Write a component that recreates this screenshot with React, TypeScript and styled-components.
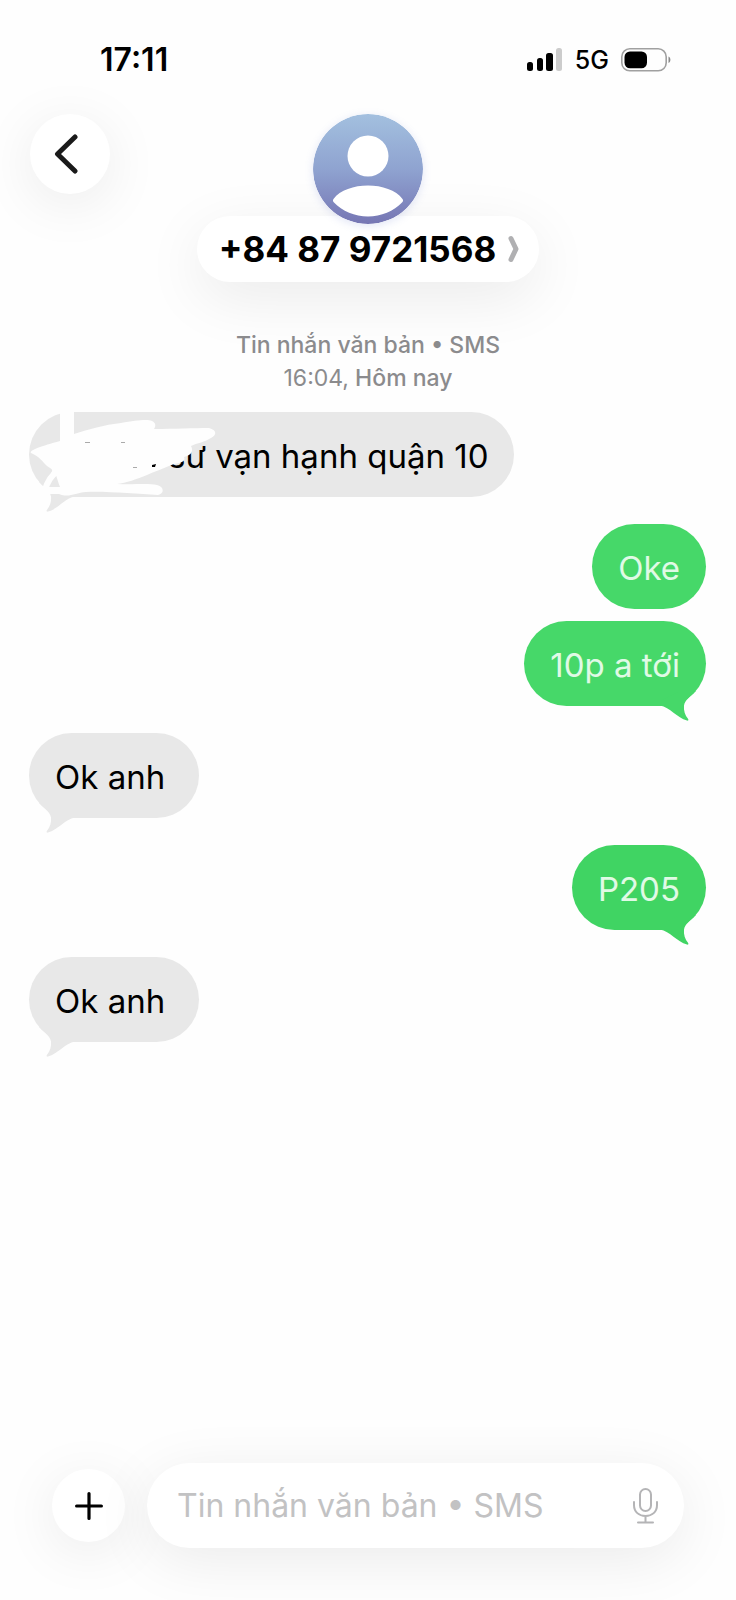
import React from "react";
import styled, { createGlobalStyle } from "styled-components";

const GlobalStyle = createGlobalStyle`
  * { box-sizing: border-box; }
  body {
    margin: 0;
    background: #fefefe;
    color: #000;
    font-family: Inter, "Liberation Sans", sans-serif;
  }
  button { border: 0; padding: 0; font: inherit; color: inherit; cursor: pointer; }
  svg { display: block; }
`;

const Screen = styled.div`
  display: flex;
  flex-direction: column;
  min-height: 100vh;
`;

const StatusBar = styled.header`
  display: flex;
  align-items: center;
  justify-content: space-between;
  padding: 40px 64px 34px 100px;
`;

const Clock = styled.time`
  font-size: 32px;
  font-weight: 600;
  line-height: 40px;
`;

const StatusIcons = styled.div`
  display: flex;
  align-items: center;
  gap: 12px;
`;

const Network = styled.span`
  font-size: 25px;
  font-weight: 500;
  line-height: 32px;
`;

const TopBar = styled.div`
  display: grid;
  grid-template-columns: 80px 1fr 80px;
  align-items: start;
  padding: 0 30px;
`;

const RoundButton = styled.button<{ $size: number }>`
  display: flex;
  align-items: center;
  justify-content: center;
  flex: none;
  width: ${(p) => p.$size}px;
  height: ${(p) => p.$size}px;
  border-radius: 50%;
  background: #fff;
  box-shadow: 0 10px 56px rgba(0, 0, 0, 0.08);
`;

const Contact = styled.div`
  display: flex;
  flex-direction: column;
  align-items: center;
`;

const Avatar = styled.svg`
  position: relative;
  z-index: 1;
  border-radius: 50%;
  box-shadow: 0 2px 8px rgba(110, 130, 210, 0.2);
`;

const ContactButton = styled.button`
  display: flex;
  align-items: center;
  gap: 12px;
  height: 66px;
  margin-top: -8px;
  padding: 0 19px 0 22px;
  border-radius: 33px;
  background: #fff;
  box-shadow: 0 16px 60px rgba(0, 0, 0, 0.08);
  font-size: 35px;
  font-weight: 700;
  line-height: 40px;
  white-space: nowrap;
`;

const Meta = styled.p`
  margin: 47px 0 17px;
  color: #8b8b8d;
  font-size: 23px;
  font-weight: 500;
  line-height: 33px;
  text-align: center;
`;

const MetaTime = styled.span`
  font-weight: 400;
`;

const Thread = styled.main`
  display: flex;
  flex: 1;
  flex-direction: column;
  gap: 27px;
  padding: 0 30px 0 29px;
`;

const Group = styled.div<{ $outgoing?: boolean }>`
  display: flex;
  flex-direction: column;
  align-items: ${(p) => (p.$outgoing ? "flex-end" : "flex-start")};
  gap: 12px;
`;

const Bubble = styled.div<{ $outgoing?: boolean; $fill: string }>`
  position: relative;
  min-width: ${(p) => (p.$outgoing ? 0 : 170)}px;
  padding: 24px 26px 21px;
  border-radius: 43px;
  background: ${(p) => p.$fill};
  color: ${(p) => (p.$outgoing ? "#e0fae6" : "#000")};
  font-size: 33px;
  line-height: 40px;
  white-space: nowrap;
`;

const Tail = styled.svg<{ $outgoing?: boolean }>`
  position: absolute;
  bottom: -15px;
  ${(p) => (p.$outgoing ? "right: 10px;" : "left: 10px; transform: scaleX(-1);")}
`;

const HiddenWord = styled.span`
  display: inline-block;
  width: 113px;
`;

const Scribble = styled.svg`
  position: absolute;
  top: 0;
  left: 0;
`;

const Composer = styled.form`
  display: flex;
  align-items: center;
  gap: 22px;
  padding: 40px 52px 52px;
`;

const Field = styled.div`
  display: flex;
  align-items: center;
  flex: 1;
  min-width: 0;
  height: 85px;
  padding: 0 26px 0 30px;
  border-radius: 43px;
  background: #fff;
  box-shadow: 0 12px 60px rgba(0, 0, 0, 0.08);
`;

const MessageInput = styled.input`
  flex: 1;
  min-width: 0;
  padding: 0;
  border: 0;
  outline: 0;
  background: transparent;
  font: 400 32px/44px Inter, "Liberation Sans", sans-serif;
  &::placeholder { color: #c2c2c3; opacity: 1; }
`;

const MicButton = styled.button`
  flex: none;
  background: none;
`;

function MessageTail({ outgoing, fill }: { outgoing?: boolean; fill: string }) {
  return (
    <Tail $outgoing={outgoing} width="36" height="30" viewBox="0 0 36 30" aria-hidden="true">
      <path d="M0 14.5C10 16 17 27 27 29.6C28.4 30 28.8 29 28 27.8C25 24 23.500 20 24 14.500C25 9 30 6 36 0H20L0 10Z" fill={fill} />
    </Tail>
  );
}

const GREY = "#e8e8e8";
const GREEN = "#46d869";
const DEEP_GREEN = "#40d463";

export default function App() {
  return (
    <Screen>
      <GlobalStyle />
      <StatusBar>
        <Clock>17:11</Clock>
        <StatusIcons>
          <svg width="36" height="24" viewBox="0 0 36 24" aria-label="Signal">
            <rect x="0" y="14" width="6" height="9" rx="2.500" />
            <rect x="10" y="10" width="6" height="13" rx="2.500" />
            <rect x="19" y="5" width="7" height="18" rx="2.500" />
            <rect x="29" y="0" width="6" height="23" rx="2.500" fill="#ccc" />
          </svg>
          <Network>5G</Network>
          <svg width="51" height="24" viewBox="0 0 51 24" aria-label="Battery">
            <rect x="0.800" y="0.800" width="44.400" height="22" rx="8" fill="none" stroke="#a0a0a0" strokeWidth="1.600" />
            <rect x="3.500" y="3.500" width="22.500" height="16.800" rx="5.500" />
            <path d="M47.500 8.500C50 9.500 50 14 47.500 15Z" fill="#888" />
          </svg>
        </StatusIcons>
      </StatusBar>

      <TopBar>
        <RoundButton $size={80} type="button" aria-label="Quay lại">
          <svg width="32" height="44" viewBox="0 0 32 44" fill="none" stroke="#1a1a1a" strokeWidth="5" strokeLinecap="round" strokeLinejoin="round">
            <path d="M21 5L3.500 22L21 39" />
          </svg>
        </RoundButton>
        <Contact>
          <Avatar width="110" height="110" viewBox="0 0 110 110" aria-hidden="true">
            <defs>
              <linearGradient id="avatar" x1="0" y1="0" x2="0" y2="1">
                <stop offset="0" stopColor="#a3c0df" />
                <stop offset="0.500" stopColor="#8fa3d0" />
                <stop offset="1" stopColor="#7676b4" />
              </linearGradient>
            </defs>
            <circle cx="55" cy="55" r="55" fill="url(#avatar)" />
            <circle cx="55" cy="42" r="20.500" fill="#fff" />
            <path d="M20.500 85C27 76 41 71.500 55 71.500S83 76 89.500 85C90.500 86.500 90 87.500 89 88.500C81 97 68 102.500 55 102.500S29 97 21 88.500C20 87.500 19.500 86.500 20.500 85Z" fill="#fff" />
          </Avatar>
          <ContactButton type="button">
            +84 87 9721568
            <svg width="12" height="28" viewBox="0 0 12 28" fill="none" stroke="#b0b0b2" strokeWidth="5" strokeLinecap="round" strokeLinejoin="round">
              <path d="M3 3.500L8 14L3 24.500" />
            </svg>
          </ContactButton>
        </Contact>
      </TopBar>

      <Meta>
        Tin nhắn văn bản • SMS
        <br />
        <MetaTime>16:04,</MetaTime> Hôm nay
      </Meta>

      <Thread>
        <Group>
          <Bubble $fill={GREY}>
            <MessageTail fill={GREY} />
            <HiddenWord />
            sư vạn hạnh quận 10
            <Scribble width="190" height="100" viewBox="0 0 190 100" aria-hidden="true">
              <path fill="#fefefe" d="M31 0H45V22C60 17 75 13 92 11C108 8 119 7 123 9C127 11 127 14 125 17C145 17 165 16 180 16C188 18 188 23 182 26C176 30 168 31 162 34C165 40 162 43 155 45C157 49 152 51 145 52C135 56 125 60 118 63C108 67 97 71 88 72C104 73 118 71 128 73C136 75 135 82 129 83C108 82 77 79 57 80C46 81 40 86 30 82H14C13 80 14 77 18 75H31C29 70 28 66 27 63L22 61C25 57 22 57 18 54C13 49 11 45 2 41C0 38 13 34 31 29Z" />
              <path d="M28 60C22 63 18 71 15 80" fill="none" stroke="#fefefe" strokeWidth="6" strokeLinecap="round" />
              <path d="M123 53l4 -1l-1 3h-3z" />
              <path fill="#aaa" d="M56 30h5v1h-5zM92 30h4v1h-4zM104 55h4v1h-4z" />
            </Scribble>
          </Bubble>
        </Group>
        <Group $outgoing>
          <Bubble $outgoing $fill={GREEN}>Oke</Bubble>
          <Bubble $outgoing $fill={GREEN}>
            <MessageTail outgoing fill={GREEN} />
            10p a tới
          </Bubble>
        </Group>
        <Group>
          <Bubble $fill={GREY}>
            <MessageTail fill={GREY} />
            Ok anh
          </Bubble>
        </Group>
        <Group $outgoing>
          <Bubble $outgoing $fill={DEEP_GREEN}>
            <MessageTail outgoing fill={DEEP_GREEN} />
            P205
          </Bubble>
        </Group>
        <Group>
          <Bubble $fill={GREY}>
            <MessageTail fill={GREY} />
            Ok anh
          </Bubble>
        </Group>
      </Thread>

      <Composer onSubmit={(e) => e.preventDefault()}>
        <RoundButton $size={73} type="button" aria-label="Thêm">
          <svg width="28" height="28" viewBox="0 0 28 28" fill="none" stroke="#000" strokeWidth="3.200" strokeLinecap="round">
            <path d="M14 1.600V26.400M1.600 14H26.400" />
          </svg>
        </RoundButton>
        <Field>
          <MessageInput aria-label="Tin nhắn văn bản" placeholder="Tin nhắn văn bản • SMS" />
          <MicButton type="button" aria-label="Đọc chính tả">
            <svg width="25" height="36" viewBox="0 0 25 36" fill="none" stroke="#b4b4b6" strokeWidth="2" strokeLinecap="round">
              <rect x="7" y="1" width="11" height="22" rx="5.500" />
              <path d="M1 14V17C1 24 6 28 12.500 28S24 24 24 17V14M12.500 28V34.500M5 34.500H20" />
            </svg>
          </MicButton>
        </Field>
      </Composer>
    </Screen>
  );
}
